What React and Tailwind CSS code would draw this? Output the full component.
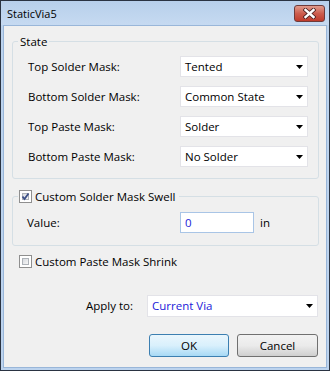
import React from 'react'

const Select = ({ value, className = '', textClass = 'text-black' }) => (
  <div className={`flex items-center justify-between h-[21px] bg-white border border-[#e3e3e8] pl-[4px] pr-[4px] ${className}`}>
    <span className={textClass}>{value}</span>
    <svg width="7" height="4" viewBox="0 0 7 4">
      <path d="M0 0h7L3.5 4z" fill="#000" />
    </svg>
  </div>
)

const Check = ({ checked }) => (
  <span className="w-[13px] h-[13px] shrink-0 border border-[#8f8f8f] bg-white p-[2px] flex">
    <span className="flex-1 flex items-center justify-center border border-[#aeb3b9] bg-gradient-to-br from-[#d8dbe0] to-[#f7f7f7]">
      {checked && (
        <svg width="9" height="9" viewBox="0 0 9 9" className="-m-[2px]">
          <path d="M1.5 4.5L3.5 7L7.5 1.5" fill="none" stroke="#3c4f86" strokeWidth="1.8" />
        </svg>
      )}
    </span>
  </span>
)

export default function App() {
  const rows = [
    ['Top Solder Mask:', 'Tented'],
    ['Bottom Solder Mask:', 'Common State'],
    ['Top Paste Mask:', 'Solder'],
    ['Bottom Paste Mask:', 'No Solder'],
  ]

  return (
    <div className="w-[330px] h-[371px] border border-[#2a3342] bg-[#bcd3ee] flex flex-col font-['Open_Sans',sans-serif] text-[11.5px] text-black">
      {/* Title bar */}
      <div className="h-[24px] shrink-0 flex items-center justify-between pl-[6px] pr-[4px] bg-gradient-to-b from-[#b7cfeb] to-[#c6daf1]">
        <span className="text-[11px] leading-none">StaticVia5</span>
        <button className="w-[31px] h-[17px] rounded-[3px] border border-[#6e3b3b] bg-gradient-to-b from-[#e09a8c] via-[#cc5d4e] to-[#bf3a2b] flex items-center justify-center">
          <svg width="13" height="11" viewBox="0 0 13 11">
            <path d="M2.5 2L10.5 9M10.5 2L2.5 9" stroke="#4a2020" strokeWidth="4.2" strokeLinecap="square" />
            <path d="M2.5 2L10.5 9M10.5 2L2.5 9" stroke="#fff" strokeWidth="2.4" strokeLinecap="square" />
          </svg>
        </button>
      </div>

      {/* Client area */}
      <div className="flex-1 mx-[2px] mb-[2px] border border-[#99b6d9] bg-[#f0f0f0] flex flex-col">
        <fieldset className="mt-[8px] ml-[8px] w-[307px] border border-[#d5dfe5] rounded-[3px]">
          <legend className="ml-[5px] px-[2px] leading-[15px]">State</legend>
          <div className="pt-[7px] pb-[11px] pl-[15px] flex flex-col gap-[9px]">
            {rows.map(([label, value]) => (
              <div key={label} className="grid grid-cols-[152px_128px] items-center">
                <span>{label}</span>
                <Select value={value} />
              </div>
            ))}
          </div>
        </fieldset>

        <fieldset className="mt-[10px] ml-[8px] w-[307px] border border-[#d5dfe5] rounded-[3px]">
          <legend className="ml-[5px] px-[1px] leading-[15px] flex items-center gap-[3px] pr-[4px]">
            <Check checked />
            <span>Custom Solder Mask Swell</span>
          </legend>
          <div className="pt-[8px] pb-[12px] pl-[14px] flex items-center">
            <span className="w-[153px]">Value:</span>
            <div className="w-[74px] h-[21px] bg-white border border-[#a9c5e6] pl-[4px] flex items-center text-[#1a1ad8]">0</div>
            <span className="ml-[6px]">in</span>
          </div>
        </fieldset>

        <div className="mt-[8px] ml-[15px] flex items-center gap-[3px] leading-[15px]">
          <Check />
          <span>Custom Paste Mask Shrink</span>
        </div>

        <div className="mt-[26px] pl-[82px] flex items-center">
          <span className="w-[61px]">Apply to:</span>
          <Select value="Current Via" className="w-[171px] h-[22px]" textClass="text-[#1a1ad8]" />
        </div>

        <div className="mt-[17px] pr-[8px] flex justify-end gap-[8px]">
          <button className="w-[80px] h-[23px] rounded-[3px] border border-[#3c7fb1] bg-gradient-to-b from-[#eaf6fd] via-[#d9f0fc] to-[#a7d9f5] flex items-center justify-center">
            OK
          </button>
          <button className="w-[81px] h-[23px] rounded-[3px] border border-[#707070] bg-gradient-to-b from-[#f2f2f2] via-[#ebebeb] to-[#cfcfcf] flex items-center justify-center">
            Cancel
          </button>
        </div>
      </div>
    </div>
  )
}
